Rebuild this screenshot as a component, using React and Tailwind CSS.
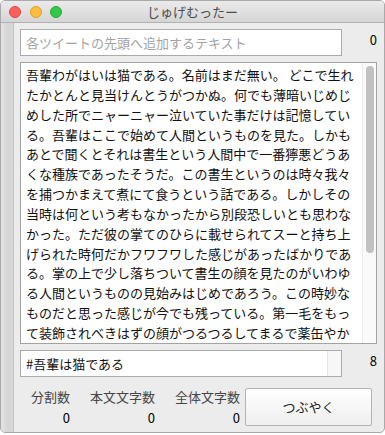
const BODY_LINES = [
  "吾輩わがはいは猫である。名前はまだ無い。 どこで生れ",
  "たかとんと見当けんとうがつかぬ。何でも薄暗いじめじ",
  "めした所でニャーニャー泣いていた事だけは記憶してい",
  "る。吾輩はここで始めて人間というものを見た。しかも",
  "あとで聞くとそれは書生という人間中で一番獰悪どうあ",
  "くな種族であったそうだ。この書生というのは時々我々",
  "を捕つかまえて煮にて食うという話である。しかしその",
  "当時は何という考もなかったから別段恐しいとも思わな",
  "かった。ただ彼の掌てのひらに載せられてスーと持ち上",
  "げられた時何だかフワフワした感じがあったばかりであ",
  "る。掌の上で少し落ちついて書生の顔を見たのがいわゆ",
  "る人間というものの見始みはじめであろう。この時妙な",
  "ものだと思った感じが今でも残っている。第一毛をもっ",
  "て装飾されべきはずの顔がつるつるしてまるで薬缶やか",
];

const STATS = [
  { label: "分割数", value: 0, width: "w-[50px]" },
  { label: "本文文字数", value: 0, width: "w-[85px]" },
  { label: "全体文字数", value: 0, width: "w-[85px]" },
];

const App = () => {
  return (
    <div className="w-[385px] h-[435px] bg-white font-['Noto_Sans_CJK_JP','Noto_Sans',sans-serif]">
      <div className="w-[385px] h-[433px] rounded-[5px] border border-[#a9a9a9] bg-[#ececec] overflow-hidden flex flex-col">
        {/* Title bar */}
        <div className="relative h-[22px] shrink-0 bg-gradient-to-b from-[#ebebeb] to-[#d5d5d5] border-b border-[#b1b1b1] flex items-center justify-center">
          <div className="absolute left-[8px] top-[5px] flex gap-[8.5px]">
            <span className="w-[12px] h-[12px] rounded-full bg-[#fc605c] border border-[#e0443e]" />
            <span className="w-[12px] h-[12px] rounded-full bg-[#fdbc40] border border-[#dea123]" />
            <span className="w-[12px] h-[12px] rounded-full bg-[#34c84a] border border-[#27aa35]" />
          </div>
          <span className="text-[13px] leading-none text-[#4d4d4d]">じゅげむったー</span>
        </div>

        <div className="flex flex-1">
          {/* Left strip */}
          <div className="w-[13px] shrink-0 bg-gradient-to-r from-[#e4e4e4] via-[#d6d6d6] to-[#d6d6d6] border-r border-[#c2c2c2]" />

          <div className="flex-1 pl-[6px] pt-[6px] flex flex-col">
            {/* Prefix input */}
            <div className="flex">
              <div className="w-[322px] h-[27px] bg-white border border-[#ababab] flex items-center pl-[5px]">
                <span className="text-[13px] text-[#a3a3a3]">各ツイートの先頭へ追加するテキスト</span>
              </div>
              <div className="flex-1 text-right pr-[7px] pt-[2px] text-[13px] leading-[18px] text-black">0</div>
            </div>

            {/* Body text area */}
            <div className="mt-[6px] w-[357px] h-[282px] bg-white border border-[#a3a3a3] flex overflow-hidden">
              <div className="flex-1 pl-[5px] pt-[2px] text-[13px] leading-[19.85px] text-[#111] whitespace-pre">
                {BODY_LINES.map((line, i) => (
                  <div key={i}>{line}</div>
                ))}
              </div>
              <div className="w-[14px] shrink-0 border-l border-[#ebebeb] bg-[#fafafa] pt-[3px] flex justify-center">
                <div className="w-[8px] h-[187px] rounded-full bg-[#c1c1c1]" />
              </div>
            </div>

            {/* Hashtag input */}
            <div className="mt-[6px] flex">
              <div className="w-[322px] h-[27px] bg-white border border-[#ababab] flex items-center">
                <span className="flex-1 pl-[5px] text-[13px] text-[#111]">#吾輩は猫である</span>
                <div className="w-[14px] h-full bg-[#f7f7f7] border-l border-[#e6e6e6]" />
              </div>
              <div className="flex-1 text-right pr-[7px] pt-[2px] text-[13px] leading-[18px] text-black">8</div>
            </div>

            {/* Stats + button */}
            <div className="mt-[11px] flex">
              {STATS.map((s) => (
                <div key={s.label} className={`${s.width} flex flex-col items-end`}>
                  <span className="text-[13px] leading-[18px] text-[#454545] whitespace-nowrap">{s.label}</span>
                  <span className="mt-[3px] text-[13px] leading-[18px] text-black">{s.value}</span>
                </div>
              ))}
              <button
                type="button"
                className="ml-[5px] w-[127px] h-[38px] rounded-[2px] border border-[#b4b4b4] bg-gradient-to-b from-white to-[#efefef] text-[13px] text-[#222] flex items-center justify-center"
              >
                つぶやく
              </button>
            </div>
          </div>
        </div>
      </div>
    </div>
  );
};

export default App;
